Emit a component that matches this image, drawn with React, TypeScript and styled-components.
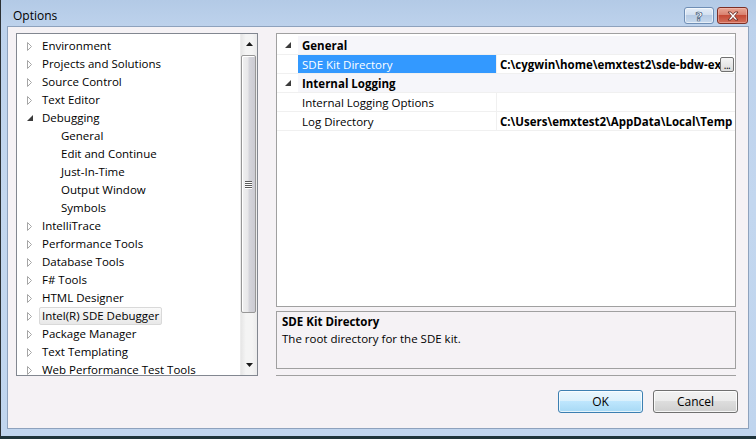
import React from 'react';
import styled, { createGlobalStyle, css } from 'styled-components';

const GlobalStyle = createGlobalStyle`
  html, body { margin: 0; padding: 0; background: #1e343a; }
  body { width: 756px; height: 439px; overflow: hidden; font-family: "Segoe UI", "Open Sans", sans-serif; font-size: 11.5px; color: #000; }
  * { box-sizing: border-box; }
`;

const Frame = styled.div`
  width: 756px;
  height: 439px;
  display: flex;
  flex-direction: column;
  background: linear-gradient(to bottom, #b3cae6 0px, #bdd2ec 26px, #c3d7ef 200px, #c0d5ee 100%);
  border-left: 1px solid #2b3034;
  border-bottom: 3px solid #1e343a;
  padding: 0 7px 7px 6px;
`;

const TitleBar = styled.div`
  height: 26px;
  flex: none;
  display: flex;
  align-items: flex-start;
  padding-left: 6px;
`;

const TitleText = styled.div`
  padding-top: 7px;
  line-height: 17px;
  font-size: 12px;
  color: #000;
  flex: 1;
`;

const CaptionButtons = styled.div`
  display: flex;
  gap: 3px;
  padding-top: 7px;
  margin-right: 1px;
`;

const CaptionButton = styled.div<{ $kind: 'help' | 'close' }>`
  height: 17px;
  border-radius: 3px;
  display: flex;
  align-items: center;
  justify-content: center;
  ${(p) =>
    p.$kind === 'help'
      ? css`
          width: 30px;
          border: 1px solid #6f8eb5;
          background: linear-gradient(to bottom, #e6eef8 0%, #d3e0f0 45%, #b7cbe4 50%, #c8daee 100%);
          box-shadow: inset 0 0 0 1px rgba(255, 255, 255, 0.55);
        `
      : css`
          width: 31px;
          border: 1px solid #7c3026;
          background: linear-gradient(to bottom, #e8a896 0%, #d9816f 45%, #c54a35 50%, #d2705c 100%);
          box-shadow: inset 0 0 0 1px rgba(255, 200, 190, 0.45);
        `}
`;

const HelpGlyph = styled.span`
  font-family: "DejaVu Sans", sans-serif;
  font-weight: bold;
  font-size: 13px;
  line-height: 13px;
  color: #fff;
  -webkit-text-stroke: 0.7px #3d5775;
  margin-top: 1px;
`;

const Client = styled.div`
  flex: 1;
  background: #f5f2f5;
  border: 1px solid #8ea2bd;
  display: flex;
  flex-direction: column;
  padding: 6px 0 0 8px;
`;

const MainArea = styled.div`
  display: flex;
  align-items: flex-start;
  gap: 18px;
`;

const TreeBox = styled.div`
  width: 242px;
  height: 343px;
  border: 1px solid #828790;
  background: #fff;
  display: flex;
  overflow: hidden;
`;

const TreeList = styled.div`
  flex: 1;
  padding-top: 3px;
  overflow: hidden;
`;

const TreeRow = styled.div<{ $level: number }>`
  height: 18px;
  display: flex;
  align-items: center;
  padding-left: ${(p) => 4 + p.$level * 19}px;
  white-space: nowrap;
`;

const Expander = styled.div`
  width: 17px;
  height: 18px;
  display: flex;
  align-items: center;
  justify-content: center;
  flex: none;
`;

const TreeLabel = styled.div<{ $selected?: boolean }>`
  margin-left: 1px;
  height: 18px;
  line-height: 16px;
  padding: 0 2px;
  border: 1px solid transparent;
  border-radius: 2px;
  ${(p) =>
    p.$selected &&
    css`
      border-color: #d9d9d9;
      background: linear-gradient(to bottom, #fafafa, #e8e8e8);
    `}
`;

const ScrollBar = styled.div`
  width: 17px;
  flex: none;
  display: flex;
  flex-direction: column;
  background: linear-gradient(to right, #e6e6e6 0%, #f4f4f4 30%, #f4f4f4 70%, #ebebeb 100%);
  border-left: 1px solid #ececec;
`;

const ScrollArrow = styled.div`
  height: 20px;
  display: flex;
  align-items: center;
  justify-content: center;
  flex: none;
`;

const ScrollTrack = styled.div`
  flex: 1;
  padding: 1px 1px 0 0;
  display: flex;
  flex-direction: column;
`;

const Thumb = styled.div`
  height: 258px;
  border: 1px solid #979797;
  border-radius: 2px;
  background: linear-gradient(to right, #f1f1f1 0%, #e8e8ea 45%, #d5d5db 55%, #cbcbd2 100%);
  box-shadow: inset 1px 1px 0 #fff;
  display: flex;
  align-items: center;
  justify-content: center;
`;

const Grip = styled.div`
  width: 7px;
  display: flex;
  flex-direction: column;
  gap: 1px;
  & > span {
    display: block;
    height: 1px;
    background: #5a5a5a;
    box-shadow: 0 1px 0 #fff;
  }
`;

const RightColumn = styled.div`
  width: 460px;
  display: flex;
  flex-direction: column;
`;

const PropGrid = styled.div`
  height: 274px;
  border: 1px solid #a0a0a0;
  background: #fff;
  padding-top: 2px;
`;

const PropRow = styled.div<{ $category?: boolean }>`
  height: 19px;
  display: flex;
  border-bottom: 1px solid #f0f0f0;
  ${(p) =>
    p.$category &&
    css`
      font-weight: bold;
    `}
`;

const Gutter = styled.div`
  width: 21px;
  flex: none;
  display: flex;
  align-items: center;
  justify-content: center;
  padding-left: 1px;
  background: #fff;
`;

const CategoryLabel = styled.div`
  flex: 1;
  display: flex;
  align-items: center;
  padding-left: 4px;
  background: #f6f6fa;
`;

const NameCell = styled.div<{ $selected?: boolean }>`
  width: 199px;
  flex: none;
  display: flex;
  align-items: center;
  padding-left: 4px;
  white-space: nowrap;
  overflow: hidden;
  border-right: 1px solid #f0f0f0;
  ${(p) =>
    p.$selected &&
    css`
      background: #3399ff;
      color: #fff;
    `}
`;

const ValueCell = styled.div`
  flex: 1;
  min-width: 0;
  display: flex;
  align-items: center;
  padding-left: 3px;
  font-weight: bold;
`;

const ValueText = styled.div`
  flex: 1;
  min-width: 0;
  overflow: hidden;
  white-space: nowrap;
`;

const EllipsisButton = styled.div`
  width: 14px;
  height: 15px;
  flex: none;
  margin-right: 1px;
  border: 1px solid #707070;
  border-radius: 2px;
  background: linear-gradient(to bottom, #f5f5f5, #dcdcdc);
  font-weight: normal;
  font-size: 10px;
  line-height: 14px;
  text-align: center;
  letter-spacing: -0.5px;
`;

const Description = styled.div`
  margin-top: 4px;
  height: 58px;
  border: 1px solid #a0a0a0;
  padding: 1px 5px;
`;

const DescTitle = styled.div`
  font-weight: bold;
  line-height: 17px;
`;

const DescText = styled.div`
  line-height: 17px;
`;

const Separator = styled.div`
  margin-top: 6px;
  height: 1px;
  background: #a0a0a0;
`;

const ButtonRow = styled.div`
  display: flex;
  justify-content: flex-end;
  gap: 10px;
  padding: 14px 10px 0 0;
`;

const DialogButton = styled.div<{ $default?: boolean }>`
  width: 85px;
  height: 23px;
  border-radius: 3px;
  display: flex;
  align-items: center;
  justify-content: center;
  font-size: 12px;
  border: 1px solid ${(p) => (p.$default ? '#3c7fb1' : '#707070')};
  background: ${(p) =>
    p.$default
      ? 'linear-gradient(to bottom, #eaf6fd 0%, #d9f0fc 50%, #bee6fd 50%, #a7d9f5 100%)'
      : 'linear-gradient(to bottom, #f2f2f2 0%, #ebebeb 50%, #dddddd 50%, #cfcfcf 100%)'};
  box-shadow: inset 0 0 0 1px ${(p) => (p.$default ? 'rgba(255,255,255,0.7)' : 'rgba(255,255,255,0.8)')};
`;

const CollapsedArrow = () => (
  <svg width="6" height="9" viewBox="0 0 6 9">
    <path d="M0.5 0.5 L4.5 4.5 L0.5 8.5 Z" fill="#fff" stroke="#a6a6a6" strokeWidth="1" />
  </svg>
);

const ExpandedArrow = () => (
  <svg width="6" height="6" viewBox="0 0 6 6">
    <path d="M6 0 L6 6 L0 6 Z" fill="#3c3c3c" />
  </svg>
);

const UpArrow = () => (
  <svg width="7" height="4" viewBox="0 0 7 4">
    <path d="M3.5 0 L7 4 L0 4 Z" fill="#1a1a1a" />
  </svg>
);

const DownArrow = () => (
  <svg width="7" height="4" viewBox="0 0 7 4">
    <path d="M0 0 L7 0 L3.5 4 Z" fill="#1a1a1a" />
  </svg>
);

const CloseGlyph = () => (
  <svg width="12" height="10" viewBox="0 0 12 10">
    <path
      d="M1 1 L4 1 L6 3.5 L8 1 L11 1 L7.5 5 L11 9 L8 9 L6 6.5 L4 9 L1 9 L4.5 5 Z"
      fill="#fff"
      stroke="#5a2018"
      strokeWidth="0.8"
      strokeLinejoin="round"
    />
  </svg>
);

type TreeItem = { label: string; level: number; state: 'collapsed' | 'expanded' | 'leaf'; selected?: boolean };

const treeItems: TreeItem[] = [
  { label: 'Environment', level: 0, state: 'collapsed' },
  { label: 'Projects and Solutions', level: 0, state: 'collapsed' },
  { label: 'Source Control', level: 0, state: 'collapsed' },
  { label: 'Text Editor', level: 0, state: 'collapsed' },
  { label: 'Debugging', level: 0, state: 'expanded' },
  { label: 'General', level: 1, state: 'leaf' },
  { label: 'Edit and Continue', level: 1, state: 'leaf' },
  { label: 'Just-In-Time', level: 1, state: 'leaf' },
  { label: 'Output Window', level: 1, state: 'leaf' },
  { label: 'Symbols', level: 1, state: 'leaf' },
  { label: 'IntelliTrace', level: 0, state: 'collapsed' },
  { label: 'Performance Tools', level: 0, state: 'collapsed' },
  { label: 'Database Tools', level: 0, state: 'collapsed' },
  { label: 'F# Tools', level: 0, state: 'collapsed' },
  { label: 'HTML Designer', level: 0, state: 'collapsed' },
  { label: 'Intel(R) SDE Debugger', level: 0, state: 'collapsed', selected: true },
  { label: 'Package Manager', level: 0, state: 'collapsed' },
  { label: 'Text Templating', level: 0, state: 'collapsed' },
  { label: 'Web Performance Test Tools', level: 0, state: 'collapsed' },
];

type PropItem =
  | { kind: 'category'; label: string }
  | { kind: 'prop'; label: string; value: string; selected?: boolean; browse?: boolean };

const propItems: PropItem[] = [
  { kind: 'category', label: 'General' },
  { kind: 'prop', label: 'SDE Kit Directory', value: 'C:\\cygwin\\home\\emxtest2\\sde-bdw-external-5.38.0-2014-01-26-win', selected: true, browse: true },
  { kind: 'category', label: 'Internal Logging' },
  { kind: 'prop', label: 'Internal Logging Options', value: '' },
  { kind: 'prop', label: 'Log Directory', value: 'C:\\Users\\emxtest2\\AppData\\Local\\Temp' },
];

export default function App() {
  return (
    <>
      <GlobalStyle />
      <Frame>
        <TitleBar>
          <TitleText>Options</TitleText>
          <CaptionButtons>
            <CaptionButton $kind="help">
              <HelpGlyph>?</HelpGlyph>
            </CaptionButton>
            <CaptionButton $kind="close">
              <CloseGlyph />
            </CaptionButton>
          </CaptionButtons>
        </TitleBar>
        <Client>
          <MainArea>
            <TreeBox>
              <TreeList>
                {treeItems.map((it) => (
                  <TreeRow key={it.label} $level={it.level}>
                    <Expander>
                      {it.state === 'collapsed' && <CollapsedArrow />}
                      {it.state === 'expanded' && <ExpandedArrow />}
                    </Expander>
                    <TreeLabel $selected={it.selected}>{it.label}</TreeLabel>
                  </TreeRow>
                ))}
              </TreeList>
              <ScrollBar>
                <ScrollArrow>
                  <UpArrow />
                </ScrollArrow>
                <ScrollTrack>
                  <Thumb>
                    <Grip>
                      <span />
                      <span />
                      <span />
                      <span />
                    </Grip>
                  </Thumb>
                </ScrollTrack>
                <ScrollArrow>
                  <DownArrow />
                </ScrollArrow>
              </ScrollBar>
            </TreeBox>
            <RightColumn>
              <PropGrid>
                {propItems.map((p) =>
                  p.kind === 'category' ? (
                    <PropRow key={p.label} $category>
                      <Gutter>
                        <ExpandedArrow />
                      </Gutter>
                      <CategoryLabel>{p.label}</CategoryLabel>
                    </PropRow>
                  ) : (
                    <PropRow key={p.label}>
                      <Gutter />
                      <NameCell $selected={p.selected}>{p.label}</NameCell>
                      <ValueCell>
                        <ValueText>{p.value}</ValueText>
                        {p.browse && <EllipsisButton>...</EllipsisButton>}
                      </ValueCell>
                    </PropRow>
                  )
                )}
              </PropGrid>
              <Description>
                <DescTitle>SDE Kit Directory</DescTitle>
                <DescText>The root directory for the SDE kit.</DescText>
              </Description>
              <Separator />
            </RightColumn>
          </MainArea>
          <ButtonRow>
            <DialogButton $default>OK</DialogButton>
            <DialogButton>Cancel</DialogButton>
          </ButtonRow>
        </Client>
      </Frame>
    </>
  );
}
